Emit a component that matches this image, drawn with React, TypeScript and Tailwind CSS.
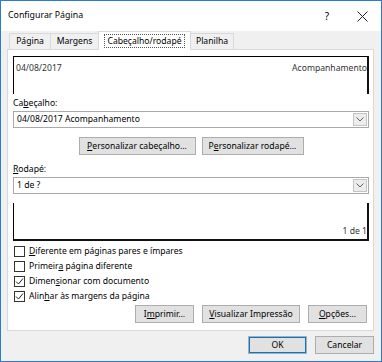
import type { ReactNode } from 'react';

const BTN = 'h-[18px] flex items-center justify-center border border-[#adadad] bg-[#e1e1e1] leading-none';

function Chevron() {
  return (
    <svg width="8" height="5" viewBox="0 0 8 5">
      <path d="M0.5 0.5 L4 4 L7.5 0.5" fill="none" stroke="#606060" strokeWidth="1" />
    </svg>
  );
}

function Select({ value }: { value: string }) {
  return (
    <div className="h-[17px] border border-[#a9a9a9] bg-white flex items-center">
      <span className="flex-1 pl-[3px] leading-none">{value}</span>
      <span className="w-[14px] h-[13px] mr-px border border-[#c4c4c4] bg-[#ececec] flex items-center justify-center">
        <Chevron />
      </span>
    </div>
  );
}

function Check({ checked, children }: { checked?: boolean; children: ReactNode }) {
  return (
    <div className="h-[15px] flex items-center">
      <span className="ml-px w-[11px] h-[11px] border border-[#333] bg-white flex items-center justify-center">
        {checked && (
          <svg width="9" height="9" viewBox="0 0 9 9">
            <path d="M1 4.5 L3.5 7 L8 1.5" fill="none" stroke="#222" strokeWidth="1" />
          </svg>
        )}
      </span>
      <span className="ml-[4px] leading-none">{children}</span>
    </div>
  );
}

export default function App() {
  return (
    <div className="w-[382px] h-[362px] border border-[#2b7bd0] bg-[#f0f0f0] flex flex-col font-['Noto_Sans',sans-serif] text-[8.6px] text-black">
      {/* title bar */}
      <div className="h-[30px] bg-white flex items-center pl-[7px]">
        <span className="text-[8.8px] flex-1">Configurar Página</span>
        <span className="text-[10px] mr-[28px]">?</span>
        <svg width="11" height="11" viewBox="0 0 11 11" className="mr-[13px]">
          <path d="M0.5 0.5 L10.5 10.5 M10.5 0.5 L0.5 10.5" stroke="#222" strokeWidth="1" />
        </svg>
      </div>

      {/* tabs */}
      <div className="h-[18px] flex items-end pl-[8px]">
        <div className="w-[42px] h-[16px] border border-b-0 border-[#d9d9d9] bg-[#f0f0f0] flex items-center justify-center">Página</div>
        <div className="w-[49px] h-[16px] -ml-px border border-b-0 border-[#d9d9d9] bg-[#f0f0f0] flex items-center justify-center">Margens</div>
        <div className="relative z-10 w-[93px] h-[19px] -mb-px -ml-px border border-b-0 border-[#d9d9d9] bg-white flex items-center justify-center">
          <span className="border border-dotted border-[#555] px-[2px] h-[14px] flex items-center">Cabeçalho/rodapé</span>
        </div>
        <div className="w-[44px] h-[16px] -ml-px border border-b-0 border-[#d9d9d9] bg-[#f0f0f0] flex items-center justify-center">Planilha</div>
      </div>

      {/* panel */}
      <div className="ml-[6px] w-[367px] h-[282px] border border-[#d9d9d9] bg-white pl-[5px] pr-[4px] flex flex-col">
        <div className="mt-[6px] h-[38px] border-t border-l border-black border-r-2 border-r-[#111] flex justify-between items-start pt-[7px] pl-[2px] text-[#333]">
          <span className="leading-none">04/08/2017</span>
          <span className="leading-none">Acompanhamento</span>
        </div>

        <div className="mt-[4px] h-[11px] leading-[11px]">
          Ca<u>b</u>eçalho:
        </div>
        <div className="mt-[2px]">
          <Select value="04/08/2017 Acompanhamento" />
        </div>

        <div className="mt-[9px] flex justify-center gap-[6px]">
          <button type="button" className={`${BTN} w-[117px]`}>
            <span><u>P</u>ersonalizar cabeçalho...</span>
          </button>
          <button type="button" className={`${BTN} w-[102px]`}>
            <span>P<u>e</u>rsonalizar rodapé...</span>
          </button>
        </div>

        <div className="mt-[9px] h-[11px] leading-[11px]">
          <u>R</u>odapé:
        </div>
        <div className="mt-[2px]">
          <Select value="1 de ?" />
        </div>

        <div className="mt-[9px] h-[38px] border-l border-black border-r-2 border-r-[#111] border-b-2 border-b-[#111] flex items-end justify-end pb-[3px] text-[#333]">
          <span className="leading-none">1 de 1</span>
        </div>

        <div className="mt-[3px] flex flex-col">
          <Check><u>D</u>iferente em páginas pares e ímpares</Check>
          <Check>Primeir<u>a</u> página diferente</Check>
          <Check checked>Dimen<u>s</u>ionar com documento</Check>
          <Check checked>Alin<u>h</u>ar às margens da página</Check>
        </div>

        <div className="mt-[1px] flex justify-end gap-[8px] pr-[2px]">
          <button type="button" className={`${BTN} w-[59px]`}>
            <span>I<u>m</u>primir...</span>
          </button>
          <button type="button" className={`${BTN} w-[98px]`}>
            <span><u>V</u>isualizar Impressão</span>
          </button>
          <button type="button" className={`${BTN} w-[59px]`}>
            <span><u>O</u>pções...</span>
          </button>
        </div>
      </div>

      {/* dialog buttons */}
      <div className="mt-[5px] flex justify-end gap-[8px] pr-[7px]">
        <button type="button" className={`${BTN} w-[59px] border-[#0078d7] shadow-[inset_0_0_0_1px_#0078d7]`}>OK</button>
        <button type="button" className={`${BTN} w-[59px]`}>Cancelar</button>
      </div>
    </div>
  );
}
